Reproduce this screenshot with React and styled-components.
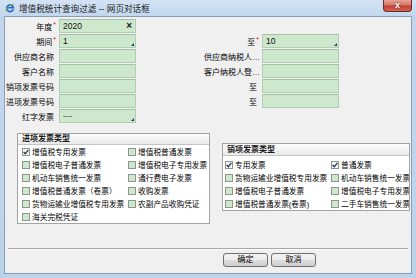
import styled, { createGlobalStyle, css } from 'styled-components'

const GlobalStyle = createGlobalStyle`
  html, body {
    margin: 0;
    padding: 0;
  }
  body {
    width: 416px;
    height: 278px;
    overflow: hidden;
    font-family: "Liberation Sans", "Noto Sans CJK SC", sans-serif;
    background: #bcd3ec;
  }
`

const fields = [
  [{ label: '年度', required: true, value: '2020', clear: true }, null],
  [{ label: '期间', required: true, value: '1', drop: true }, { label: '至', required: true, value: '10', drop: true }],
  [{ label: '供应商名称' }, { label: '供应商纳税人识别号', long: true }],
  [{ label: '客户名称' }, { label: '客户纳税人登记号', long: true }],
  [{ label: '销项发票号码' }, { label: '至' }],
  [{ label: '进项发票号码' }, { label: '至' }],
  [{ label: '红字发票', value: '----', drop: true, dim: true }, null],
]

const inputTypes = [
  { text: '增值税专用发票', checked: true },
  { text: '增值税普通发票' },
  { text: '增值税电子普通发票' },
  { text: '增值税电子专用发票' },
  { text: '机动车销售统一发票' },
  { text: '通行费电子发票' },
  { text: '增值税普通发票（卷票）' },
  { text: '收购发票' },
  { text: '货物运输业增值税专用发票' },
  { text: '农副产品收购凭证' },
  { text: '海关完税凭证' },
]

const outputTypes = [
  { text: '专用发票', checked: true },
  { text: '普通发票', checked: true },
  { text: '货物运输业增值税专用发票' },
  { text: '机动车销售统一发票' },
  { text: '增值税电子普通发票' },
  { text: '增值税电子专用发票' },
  { text: '增值税普通发票(卷票)' },
  { text: '二手车销售统一发票' },
]

const IeIcon = () => (
  <svg width="10" height="10" viewBox="0 0 10 10">
    <path d="M8.3 6.3 A3.4 3.4 0 1 1 8.4 4.6 H2.1" stroke="#1b6fd1" strokeWidth="1.7" fill="none" />
    <path d="M0.6 8.8 C0.2 5.6 5.5 1.2 9.6 1.1" stroke="#e9a820" strokeWidth="0.8" fill="none" />
  </svg>
)

const Tick = () => (
  <svg width="6" height="6" viewBox="0 0 6 6">
    <path d="M0.6 3 L2.3 4.8 L5.4 0.9" stroke="#1c2f5a" strokeWidth="1.3" fill="none" />
  </svg>
)

const Field = ({ label, required, value, clear, drop, dim, long, labelWidth }) => (
  <FieldRow>
    <Label $width={labelWidth} $long={long}>
      <LabelText>{label}</LabelText>
      {required && <Star>*</Star>}
    </Label>
    <InputBox $drop={drop} $dim={dim}>
      {value}
      {clear && <Clear>×</Clear>}
    </InputBox>
  </FieldRow>
)

const CheckList = ({ title, items, tall, inset }) => (
  <Group $tall={tall}>
    <GroupHeader $tall={tall}>{title}</GroupHeader>
    <GroupBody $inset={inset} $tall={tall}>
      {items.map((item, i) => (
        <CheckItem key={i}>
          <Box $checked={item.checked}>{item.checked && <Tick />}</Box>
          {item.text}
        </CheckItem>
      ))}
    </GroupBody>
  </Group>
)

const App = () => (
  <>
    <GlobalStyle />
    <Window>
      <TitleBar>
        <IconSlot><IeIcon /></IconSlot>
        <Title>增值税统计查询过滤 -- 网页对话框</Title>
        <CloseButton>x</CloseButton>
      </TitleBar>
      <Content>
        <Form>
          {fields.map(([left, right], i) => (
            <FormRow key={i}>
              {left ? <Field {...left} labelWidth={54} /> : <span />}
              {right ? <Field {...right} labelWidth={58} /> : <span />}
            </FormRow>
          ))}
        </Form>
        <Groups>
          <CheckList title="进项发票类型" items={inputTypes} inset={4} />
          <CheckList title="销项发票类型" items={outputTypes} inset={2} tall />
        </Groups>
        <Separator />
        <Buttons>
          <Button>确定</Button>
          <Button>取消</Button>
        </Buttons>
      </Content>
    </Window>
  </>
)

const Window = styled.div`
  width: 416px;
  height: 278px;
  box-sizing: border-box;
  display: flex;
  flex-direction: column;
  padding: 0 4px 4px 4px;
  background: linear-gradient(#d3e3f4 0, #c2d7ee 16px, #bcd3ec 100%);
`

const TitleBar = styled.div`
  height: 16px;
  flex-shrink: 0;
  display: flex;
  align-items: center;
`

const IconSlot = styled.span`
  display: flex;
  margin-left: 1px;
  margin-top: -1px;
`

const Title = styled.span`
  margin-left: 4px;
  font-size: 8.6px;
  color: #1a1a1a;
  white-space: nowrap;
  margin-top: -1px;
`

const CloseButton = styled.span`
  align-self: flex-start;
  margin-left: auto;
  width: 29px;
  height: 12px;
  box-sizing: border-box;
  border: 1px solid #6b2b26;
  border-top: none;
  border-radius: 0 0 4px 4px;
  background: linear-gradient(#e7a496 0%, #d67566 45%, #c2402f 55%, #d2665a 100%);
  color: #fff;
  font-weight: bold;
  font-size: 9px;
  line-height: 10px;
  text-align: center;
  text-shadow: 0 0 2px #5a1a14;
`

const Content = styled.div`
  flex: 1;
  display: flex;
  flex-direction: column;
  background: #f0f0f0;
  border: 1px solid #8c9db4;
`

const Form = styled.div`
  display: flex;
  flex-direction: column;
  gap: 1px;
  padding-top: 2px;
`

const FormRow = styled.div`
  display: grid;
  grid-template-columns: 199px 207px;
  height: 14px;
`

const FieldRow = styled.div`
  display: flex;
  align-items: center;
`

const Label = styled.span`
  width: ${p => p.$width}px;
  box-sizing: border-box;
  padding-right: ${p => (p.$long ? 1 : 5)}px;
  display: flex;
  justify-content: flex-end;
  align-items: center;
  font-size: 8px;
  color: #000;
  white-space: nowrap;
  overflow: hidden;
`

const LabelText = styled.span`
  overflow: hidden;
  text-overflow: ellipsis;
`

const Star = styled.span`
  color: #e01010;
  font-size: 7px;
  position: relative;
  top: -2px;
  margin-left: 1px;
  margin-right: -2px;
`

const InputBox = styled.div`
  position: relative;
  width: 77px;
  height: 14px;
  box-sizing: border-box;
  border: 1px solid #b2ceb2;
  border-top-color: #a6c2a6;
  background: #cde8cd;
  padding-left: 3px;
  font-size: ${p => (p.$dim ? '7px' : '8.5px')};
  line-height: 12px;
  color: #111;
  ${p => p.$drop && css`
    &::after {
      content: '';
      position: absolute;
      right: 1px;
      bottom: 1px;
      border-style: solid;
      border-width: 0 0 3px 3px;
      border-color: transparent transparent #1d3a73 transparent;
    }
  `}
`

const Clear = styled.span`
  position: absolute;
  right: 3px;
  top: 0;
  font-weight: bold;
  font-size: 10px;
  line-height: 12px;
  color: #222;
`

const Groups = styled.div`
  display: flex;
  align-items: flex-start;
  margin-top: 10px;
`

const Group = styled.div`
  box-sizing: border-box;
  width: ${p => (p.$tall ? 188 : 193)}px;
  margin-left: 12px;
  margin-top: ${p => (p.$tall ? 10 : 0)}px;
  border: 1px solid #a3a3a3;
  background: #fff;
  overflow: hidden;
`

const GroupHeader = styled.div`
  height: ${p => (p.$tall ? 11 : 10)}px;
  line-height: ${p => (p.$tall ? 11 : 10)}px;
  padding-left: 4px;
  font-size: 8px;
  font-weight: bold;
  color: #1a1a1a;
  background: linear-gradient(#fdfdfd, #e9e9e9);
  border-bottom: 1px solid #c4c4c4;
`

const GroupBody = styled.div`
  display: grid;
  grid-template-columns: 106px 1fr;
  grid-auto-rows: 13px;
  padding: ${p => (p.$tall ? 2 : 0)}px 0 0 ${p => p.$inset}px;
`

const CheckItem = styled.div`
  display: flex;
  align-items: center;
  white-space: nowrap;
  font-size: 7.7px;
  color: #000;
`

const Box = styled.span`
  width: 8px;
  height: 8px;
  box-sizing: border-box;
  flex-shrink: 0;
  margin-right: 2px;
  border: 1px solid #8d958d;
  background: ${p => (p.$checked ? '#f6f6f6' : '#cde8cd')};
  display: flex;
  align-items: center;
  justify-content: center;
`

const Separator = styled.div`
  margin: 24px 3px 0 3px;
  border-top: 1px solid #a7a7a7;
  border-bottom: 1px solid #fdfdfd;
`

const Buttons = styled.div`
  display: flex;
  gap: 3px;
  margin-top: 3px;
  padding-left: 218px;
`

const Button = styled.button`
  width: 45px;
  height: 14px;
  padding: 0;
  box-sizing: border-box;
  border: 1px solid #707070;
  border-radius: 3px;
  background: linear-gradient(#f3f3f3 0%, #ebebeb 50%, #dddddd 51%, #cfcfcf 100%);
  font-family: "Liberation Sans", "Noto Sans CJK SC", sans-serif;
  font-size: 8px;
  line-height: 12px;
  color: #000;
`

export default App
